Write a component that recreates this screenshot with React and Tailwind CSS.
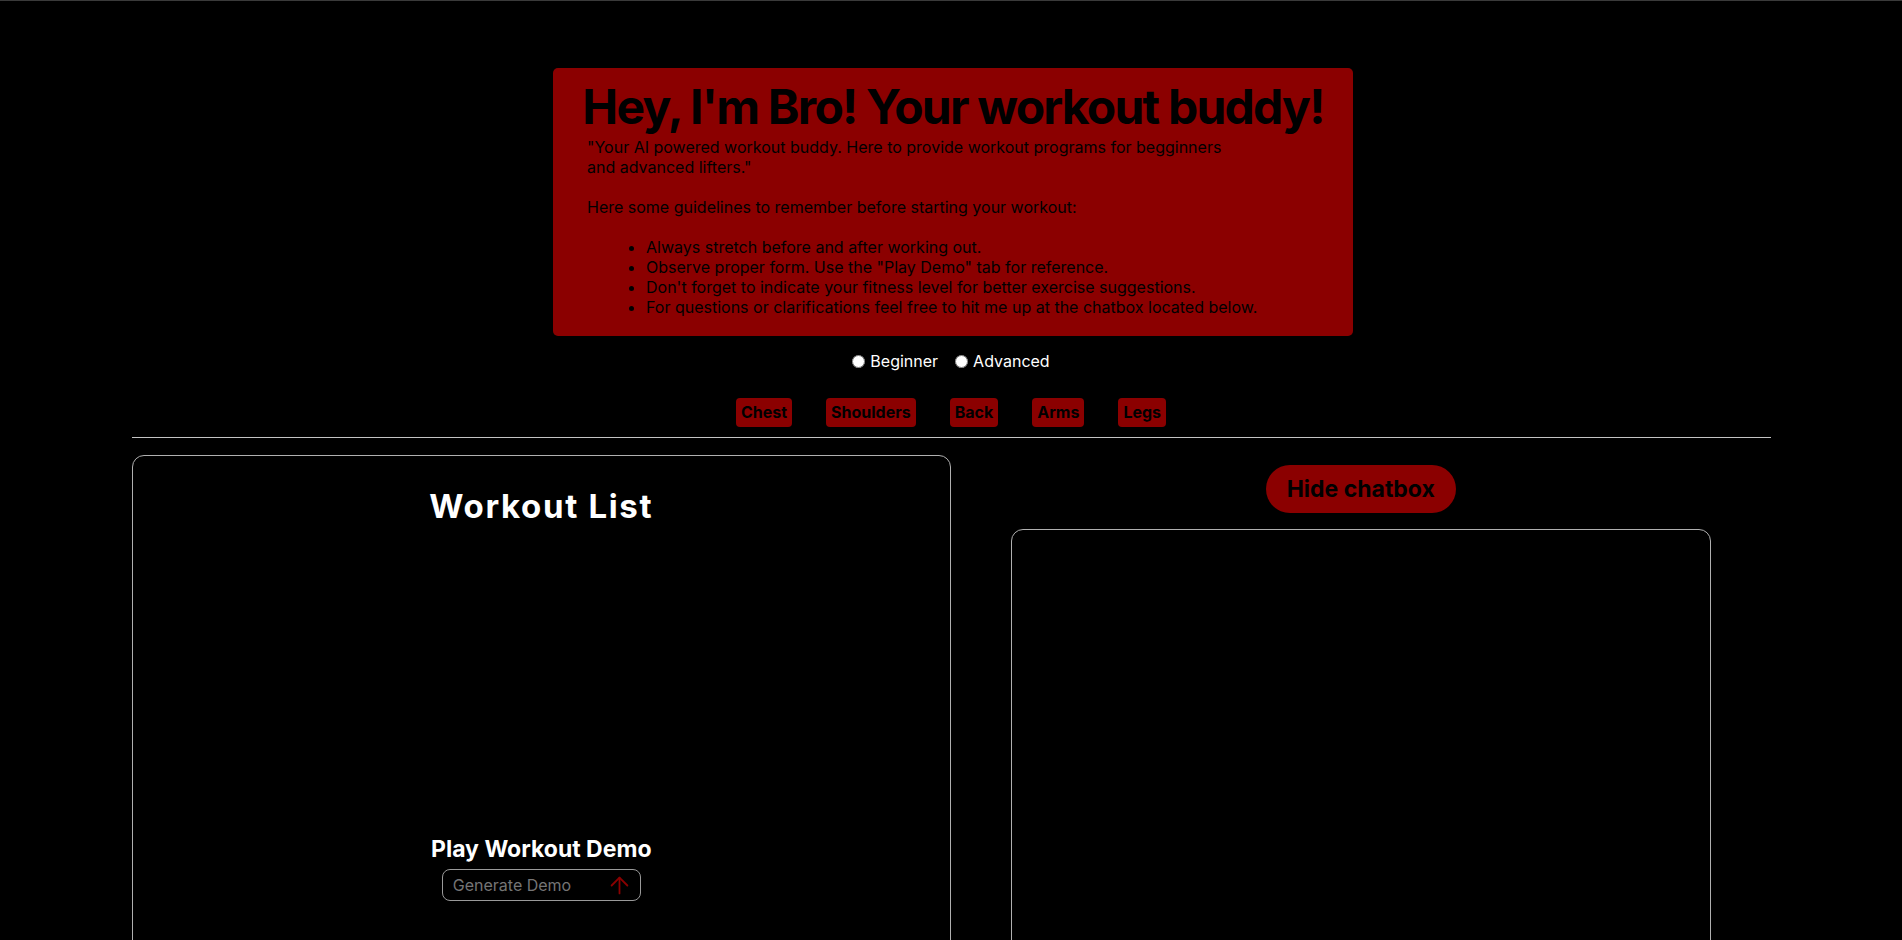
import React from "react";
import { ArrowUp } from "lucide-react";

export default function App() {
  const groups = ["Chest", "Shoulders", "Back", "Arms", "Legs"];
  const tips = [
    "Always stretch before and after working out.",
    'Observe proper form. Use the "Play Demo" tab for reference.',
    "Don't forget to indicate your fitness level for better exercise suggestions.",
    "For questions or clarifications feel free to hit me up at the chatbox located below.",
  ];
  return (
    <div className="h-screen overflow-hidden bg-black border-t border-[#3a3a3a] font-['Inter',sans-serif]">
      <div className="mx-auto mt-[67px] w-[800px] translate-x-[2px] rounded-[5px] bg-[#8b0000] px-[16px] pt-[10px] pb-[19px] text-black">
        <h1 className="whitespace-nowrap text-center text-[48px] font-bold leading-[58px] tracking-[-0.037em]">
          Hey, I'm Bro! Your workout buddy!
        </h1>
        <div className="pl-[18px] pt-px">
          <p className="w-[650px] text-[16px] leading-[20px]">
            "Your AI powered workout buddy. Here to provide workout programs for begginners and advanced lifters."
            <br />
            <br />
            Here some guidelines to remember before starting your workout:
          </p>
          <ul className="mt-[20px] list-disc pl-[59px] text-[16px] leading-[20px]">
            {tips.map((t) => (
              <li key={t}>{t}</li>
            ))}
          </ul>
        </div>
      </div>

      <div className="mt-[15px] flex h-[20px] items-center justify-center gap-[17px] text-[16px] leading-[20px] text-white">
        <label className="flex items-center gap-[5px]">
          <input type="radio" name="level" className="m-0 h-[13px] w-[13px]" />
          <span>Beginner</span>
        </label>
        <label className="flex items-center gap-[5px]">
          <input type="radio" name="level" className="m-0 h-[13px] w-[13px]" />
          <span>Advanced</span>
        </label>
      </div>

      <div className="mt-[27px] flex justify-center gap-[34px]">
        {groups.map((g) => (
          <button
            key={g}
            className="h-[29px] rounded-[4px] bg-[#8b0000] px-[5px] text-[16px] font-bold leading-[19px] text-black"
          >
            {g}
          </button>
        ))}
      </div>

      <div className="mx-auto w-[1639px]">
        <div className="mt-[10px] h-px bg-[#c4c4c4]" />
        <div className="mt-[17px] grid grid-cols-2">
          <div className="flex h-[600px] flex-col items-center rounded-xl border border-[#b0b0b0] pt-[30px]">
            <h2 className="text-[33px] font-bold leading-[40px] tracking-wider text-white">
              Workout List
            </h2>
            <div className="h-[309px]" />
            <h3 className="text-[23px] font-bold leading-[29px] text-white">Play Workout Demo</h3>
            <div className="mt-[5px] flex h-[32px] w-[199px] items-center rounded-lg border border-[#9a9a9a] pl-[10px] pr-[7px]">
              <input
                placeholder="Generate Demo"
                className="w-0 flex-1 bg-transparent text-[16px] text-white outline-none placeholder:text-[#757575]"
              />
              <ArrowUp size={27} strokeWidth={1.6} color="#8b0000" />
            </div>
          </div>

          <div className="flex flex-col items-center pt-[10px]">
            <button className="h-[48px] w-[190px] rounded-full bg-[#8b0000] text-[23px] font-bold text-black">
              Hide chatbox
            </button>
            <div className="mt-[16px] h-[600px] w-[700px] rounded-xl border border-[#b0b0b0]" />
          </div>
        </div>
      </div>
    </div>
  );
}
